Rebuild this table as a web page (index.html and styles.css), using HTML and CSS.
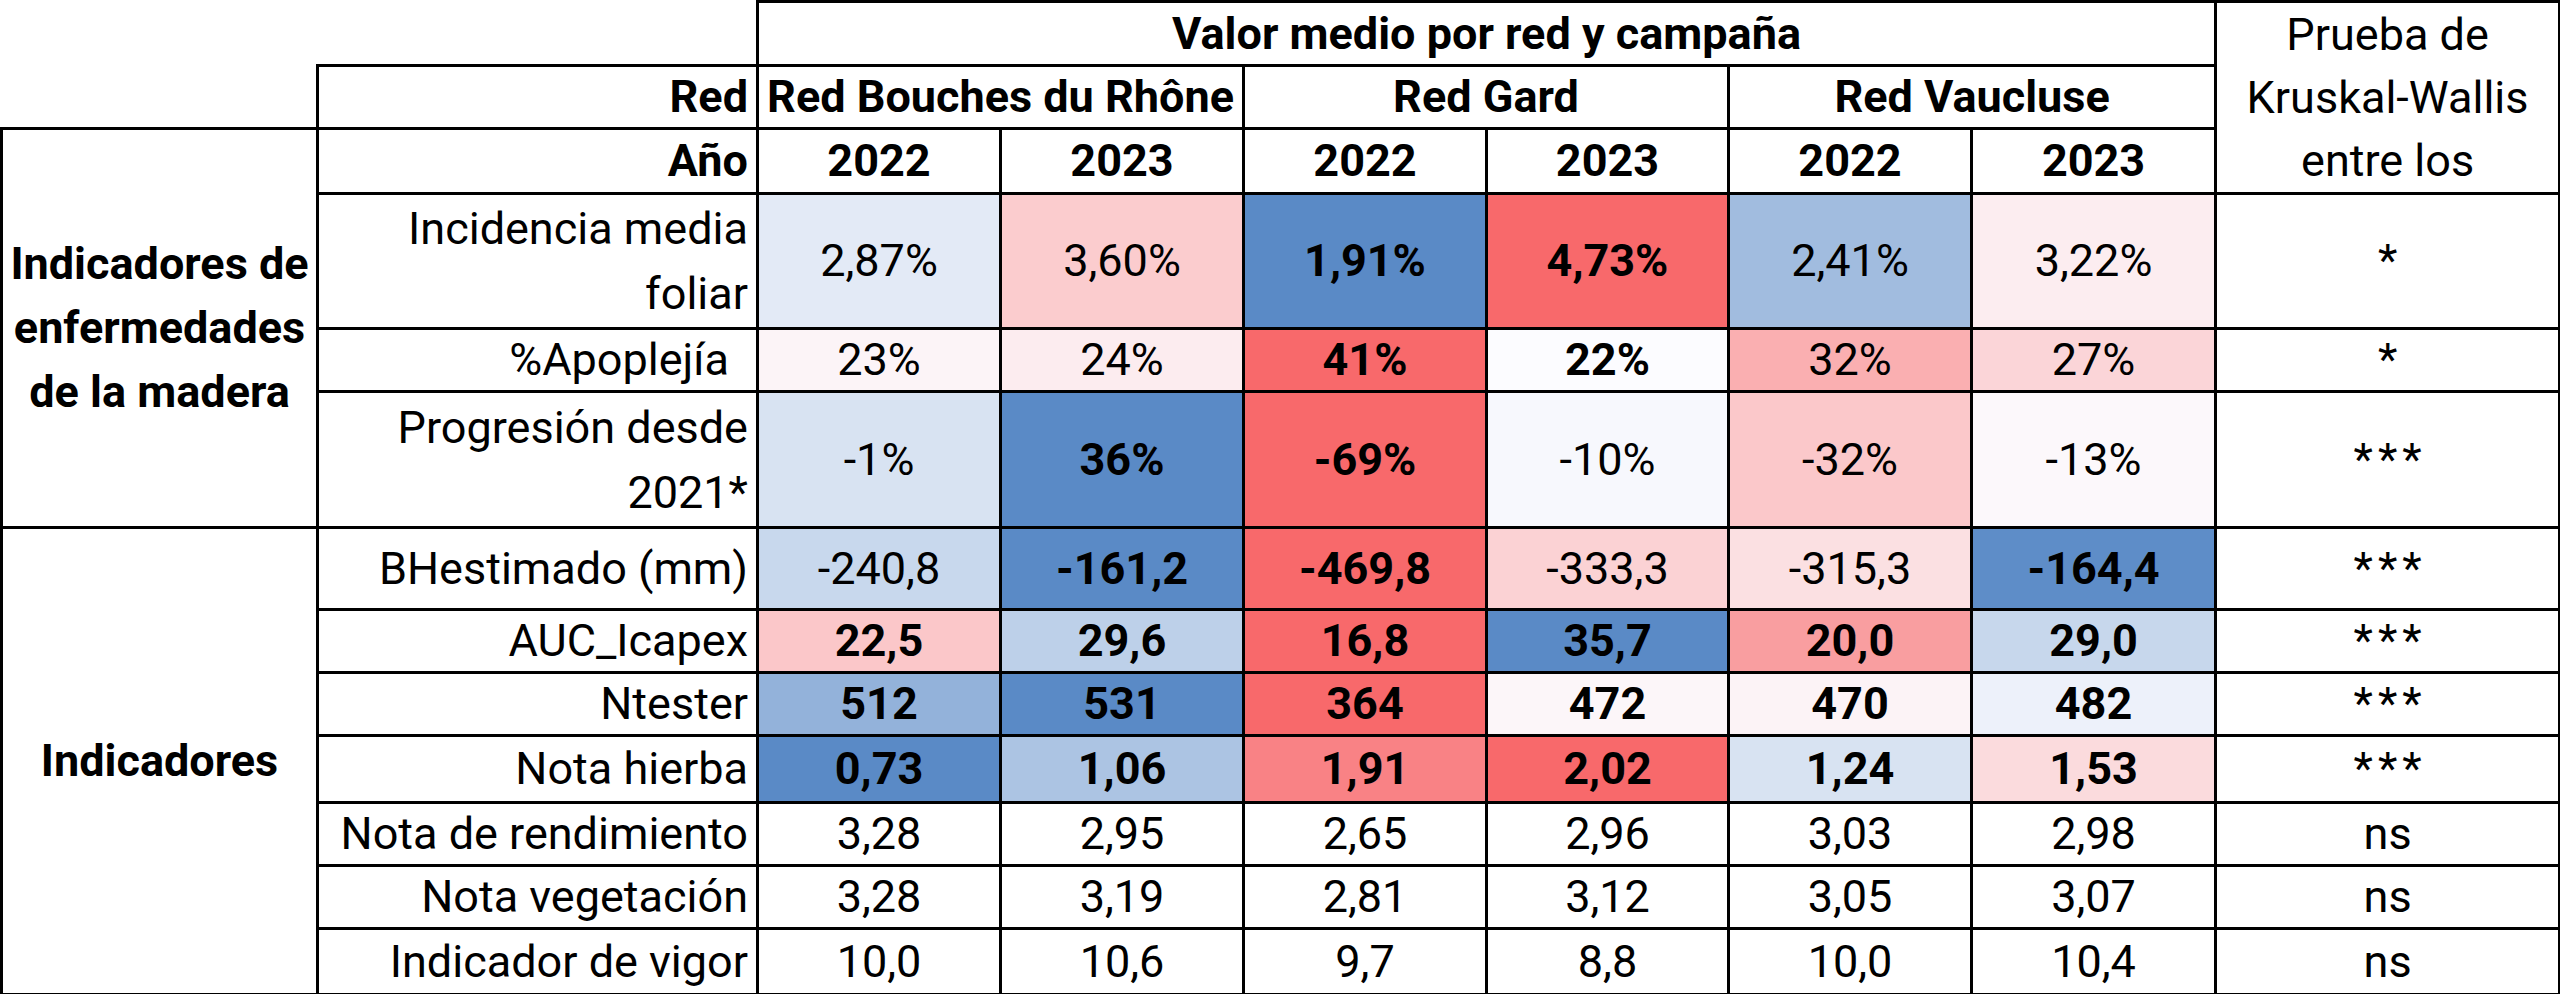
FILE: index.html
```html
<!DOCTYPE html>
<html lang="es">
<head>
<meta charset="utf-8">
<title>Valor medio por red y campaña</title>
<link rel="stylesheet" href="styles.css">
</head>
<body>
<table class="grid">
  <colgroup>
    <col class="c-group">
    <col class="c-label">
    <col class="c-data">
    <col class="c-data">
    <col class="c-data">
    <col class="c-data-n">
    <col class="c-data">
    <col class="c-data-w">
    <col class="c-kw">
  </colgroup>
  <tbody>
    <tr class="r-h1">
      <td class="blank" colspan="2"></td>
      <th class="b" colspan="6">Valor medio por red y campaña</th>
      <td class="kw-head" rowspan="3">Prueba de<br>Kruskal-Wallis<br>entre los</td>
    </tr>
    <tr class="r-h2">
      <td class="blank"></td>
      <th class="lab b">Red</th>
      <th class="b" colspan="2">Red Bouches du Rhône</th>
      <th class="b" colspan="2">Red Gard</th>
      <th class="b" colspan="2">Red Vaucluse</th>
    </tr>
    <tr class="r-h3">
      <th class="grp b" rowspan="4">Indicadores de<br>enfermedades<br>de la madera</th>
      <th class="lab b">Año</th>
      <th class="b">2022</th>
      <th class="b">2023</th>
      <th class="b">2022</th>
      <th class="b">2023</th>
      <th class="b">2022</th>
      <th class="b">2023</th>
    </tr>
    <tr class="r-2l">
      <td class="lab ml">Incidencia media<br>foliar</td>
      <td class="hm" style="--bg:#e3eaf6">2,87%</td>
      <td class="hm" style="--bg:#fbccce">3,60%</td>
      <td class="hm b" style="--bg:#5a8ac6">1,91%</td>
      <td class="hm b" style="--bg:#f8696b">4,73%</td>
      <td class="hm" style="--bg:#a1bcdf">2,41%</td>
      <td class="hm" style="--bg:#fcedf0">3,22%</td>
      <td class="sig">*</td>
    </tr>
    <tr class="r-1">
      <td class="lab trail">%Apoplejía</td>
      <td class="hm" style="--bg:#fcf4f7">23%</td>
      <td class="hm" style="--bg:#fcecef">24%</td>
      <td class="hm b" style="--bg:#f8696b">41%</td>
      <td class="hm b" style="--bg:#fcfcff">22%</td>
      <td class="hm" style="--bg:#faafb1">32%</td>
      <td class="hm" style="--bg:#fbd5d8">27%</td>
      <td class="sig">*</td>
    </tr>
    <tr class="r-2l-b">
      <td class="lab ml">Progresión desde<br>2021*</td>
      <td class="hm" style="--bg:#d8e3f2">-1%</td>
      <td class="hm b" style="--bg:#5a8ac6">36%</td>
      <td class="hm b" style="--bg:#f8696b">-69%</td>
      <td class="hm" style="--bg:#f7f8fd">-10%</td>
      <td class="hm" style="--bg:#fbc8ca">-32%</td>
      <td class="hm" style="--bg:#fcf8fb">-13%</td>
      <td class="sig ast">***</td>
    </tr>
    <tr class="r-bh">
      <th class="grp b" rowspan="7">Indicadores</th>
      <td class="lab">BHestimado (mm)</td>
      <td class="hm" style="--bg:#c8d8ed">-240,8</td>
      <td class="hm b" style="--bg:#5a8ac6">-161,2</td>
      <td class="hm b" style="--bg:#f8696b">-469,8</td>
      <td class="hm" style="--bg:#fbd2d4">-333,3</td>
      <td class="hm" style="--bg:#fbe0e2">-315,3</td>
      <td class="hm b" style="--bg:#5e8dc8">-164,4</td>
      <td class="sig ast">***</td>
    </tr>
    <tr class="r-1">
      <td class="lab">AUC_Icapex</td>
      <td class="hm b" style="--bg:#fbc7c9">22,5</td>
      <td class="hm b" style="--bg:#bdd0e9">29,6</td>
      <td class="hm b" style="--bg:#f8696b">16,8</td>
      <td class="hm b" style="--bg:#5a8ac6">35,7</td>
      <td class="hm b" style="--bg:#f99ea0">20,0</td>
      <td class="hm b" style="--bg:#c7d7ec">29,0</td>
      <td class="sig ast">***</td>
    </tr>
    <tr class="r-1">
      <td class="lab">Ntester</td>
      <td class="hm b" style="--bg:#93b2da">512</td>
      <td class="hm b" style="--bg:#5a8ac6">531</td>
      <td class="hm b" style="--bg:#f8696b">364</td>
      <td class="hm b" style="--bg:#fcf6f9">472</td>
      <td class="hm b" style="--bg:#fcf3f6">470</td>
      <td class="hm b" style="--bg:#edf1fa">482</td>
      <td class="sig ast">***</td>
    </tr>
    <tr class="r-nh">
      <td class="lab">Nota hierba</td>
      <td class="hm b" style="--bg:#5a8ac6">0,73</td>
      <td class="hm b" style="--bg:#acc4e3">1,06</td>
      <td class="hm b" style="--bg:#f98285">1,91</td>
      <td class="hm b" style="--bg:#f8696b">2,02</td>
      <td class="hm b" style="--bg:#d8e3f2">1,24</td>
      <td class="hm b" style="--bg:#fbdbdd">1,53</td>
      <td class="sig ast">***</td>
    </tr>
    <tr class="r-1">
      <td class="lab">Nota de rendimiento</td>
      <td>3,28</td>
      <td>2,95</td>
      <td>2,65</td>
      <td>2,96</td>
      <td>3,03</td>
      <td>2,98</td>
      <td class="sig">ns</td>
    </tr>
    <tr class="r-1">
      <td class="lab">Nota vegetación</td>
      <td>3,28</td>
      <td>3,19</td>
      <td>2,81</td>
      <td>3,12</td>
      <td>3,05</td>
      <td>3,07</td>
      <td class="sig">ns</td>
    </tr>
    <tr class="r-last">
      <td class="lab">Indicador de vigor</td>
      <td>10,0</td>
      <td>10,6</td>
      <td>9,7</td>
      <td>8,8</td>
      <td>10,0</td>
      <td>10,4</td>
      <td class="sig">ns</td>
    </tr>
  </tbody>
</table>
</body>
</html>
```

FILE: styles.css
```css
html, body {
  margin: 0;
  padding: 0;
  background: #ffffff;
}

.grid {
  border-collapse: collapse;
  table-layout: fixed;
  width: 2558px;
  font-family: Roboto, "Liberation Sans", Arial, sans-serif;
  font-size: 45px;
  color: #000000;
  line-height: 56px;
}

.c-group { width: 316px; }
.c-label { width: 440px; }
.c-data { width: 243px; }
.c-data-n { width: 242px; }
.c-data-w { width: 244px; }
.c-kw { width: 344px; }

.grid th,
.grid td {
  border: 3px solid #000000;
  padding: 0;
  text-align: center;
  vertical-align: middle;
  font-weight: 400;
  white-space: nowrap;
  overflow: visible;
}

.grid .blank {
  border: none;
}

.grid .b {
  font-weight: 700;
}

.grid .lab {
  text-align: right;
  padding-right: 8px;
}

.grid .trail {
  padding-right: 27px;
}

.grid .ml {
  line-height: 65px;
}

.grid .grp {
  line-height: 64px;
}

.grid .kw-head {
  line-height: 63px;
}

.grid .hm {
  background: var(--bg);
}

.grid .sig {
  font-weight: 400;
}

.grid .ast {
  letter-spacing: 5px;
  text-indent: 5px;
}

.r-h1 { height: 64px; }
.r-h2 { height: 63px; }
.r-h3 { height: 63px; }
.r-2l { height: 135px; }
.r-2l-b { height: 136px; }
.r-1 { height: 63px; }
.r-bh { height: 82px; }
.r-nh { height: 67px; }
.r-last { height: 66px; }
```
